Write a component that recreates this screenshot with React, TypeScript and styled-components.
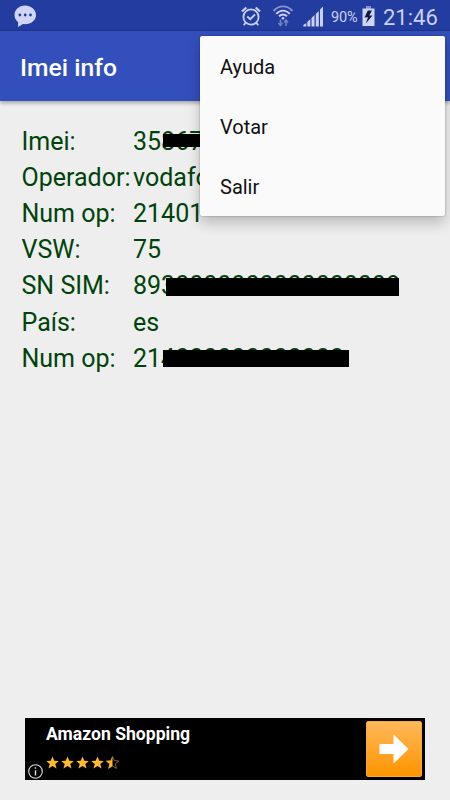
import React from "react";
import styled, { createGlobalStyle } from "styled-components";

const GlobalStyle = createGlobalStyle`
  * { box-sizing: border-box; }
  body { margin: 0; background: #eeeeee; font-family: Roboto, "Noto Sans", sans-serif; }
`;

const Screen = styled.div`
  position: relative;
  width: 450px;
  height: 800px;
  overflow: hidden;
  display: flex;
  flex-direction: column;
  background: #eeeeee;
`;

const StatusBar = styled.header`
  height: 31px;
  flex: none;
  display: flex;
  align-items: center;
  padding: 2px 12px 0 14px;
  background: #233c9f;
  border-bottom: 1px solid #20368f;
  color: #c9d0f3;
  svg { display: block; flex: none; }
`;

const StatusGroup = styled.div`
  display: flex;
  align-items: center;
  margin-left: auto;
`;

const Percent = styled.span`
  width: 27px;
  margin: 2px 4px 0 7px;
  font-size: 14.5px;
  letter-spacing: -0.1px;
  white-space: nowrap;
`;

const Clock = styled.span`
  width: 55px;
  margin: 3px 0 0 8px;
  font-size: 22px;
  line-height: 26px;
  font-weight: 400;
  white-space: nowrap;
`;

const AppBar = styled.div`
  height: 70px;
  flex: none;
  display: flex;
  align-items: center;
  padding: 2px 20px 0;
  background: #334fbb;
  box-shadow: 0 2px 4px rgba(0, 0, 0, 0.32);
  z-index: 1;
`;

const Title = styled.h1`
  margin: 0;
  font-size: 24.7px;
  font-weight: 500;
  color: #fff;
`;

const Details = styled.dl`
  display: grid;
  grid-template-columns: 111.5px 1fr;
  grid-auto-rows: 36.2px;
  margin: 0;
  padding: 22.7px 0 0 21.5px;
  flex: 1;
  align-content: start;
  font-size: 25px;
  line-height: 36.2px;
  color: #00430a;
  white-space: nowrap;
`;

const Label = styled.dt`
  margin: 0;
`;

const Value = styled.dd`
  margin: 0;
  position: relative;
`;

const Redaction = styled.span<{ $left: number; $top: number; $width: number; $height: number }>`
  position: absolute;
  left: ${(p) => p.$left}px;
  top: ${(p) => p.$top}px;
  width: ${(p) => p.$width}px;
  height: ${(p) => p.$height}px;
  background: #000;
`;

const Menu = styled.nav`
  position: absolute;
  z-index: 3;
  top: 36px;
  left: 200px;
  width: 245px;
  height: 180px;
  display: flex;
  flex-direction: column;
  background: #fafafa;
  border-radius: 2px;
  box-shadow: 0 7px 14px rgba(0, 0, 0, 0.22), 0 0 2px rgba(0, 0, 0, 0.35);
`;

const MenuItem = styled.div`
  height: 60px;
  display: flex;
  align-items: center;
  padding: 2px 20px 0;
  font-size: 20px;
  color: #111;
`;

const Ad = styled.footer`
  width: 400px;
  height: 62px;
  flex: none;
  margin: 0 0 20px 25px;
  display: flex;
  background: #000;
  color: #fff;
`;

const InfoSlot = styled.div`
  width: 21px;
  display: flex;
  align-items: flex-end;
  padding: 0 0 1px 3px;
  svg { flex: none; }
`;

const AdBody = styled.div`
  flex: 1;
  display: flex;
  flex-direction: column;
`;

const AdTitle = styled.strong`
  margin-top: 6px;
  font-size: 17.6px;
  line-height: 21px;
  font-weight: 700;
`;

const Stars = styled.div`
  display: flex;
  gap: 2px;
  margin-top: 11px;
`;

const AdButton = styled.div`
  width: 56px;
  height: 56px;
  margin: 3px 3px 0 0;
  display: flex;
  align-items: center;
  justify-content: center;
  border-radius: 2px;
  border: 1px solid #f7a737;
  background: linear-gradient(#ffb85a, #ff9400);
`;

const STAR = "M6.5 .5 8.3 4.7 12.8 5 9.3 7.9 10.5 12.4 6.5 10 2.5 12.4 3.7 7.9 .2 5 4.7 4.7Z";

const Star = ({ half = false }: { half?: boolean }) => (
  <svg width="13" height="13" viewBox="0 0 13 13">
    {half ? (
      <>
        <path d={STAR} fill="none" stroke="#a87c2c" strokeWidth=".8" />
        <path d="M6.5 .5V10L2.5 12.4 3.7 7.9 .2 5 4.7 4.7Z" fill="#ffb92e" />
      </>
    ) : (
      <path d={STAR} fill="#ffb92e" />
    )}
  </svg>
);

const ChatIcon = () => (
  <svg width="23" height="23" viewBox="0 0 23 23">
    <path d="M11 .5C5 .5.5 4.8.5 10c0 3 1.4 5.4 3.7 7.2L4 22l5-3c7 1 13-3 13-9C22 4.8 17 .5 11 .5Z" fill="#d0d5f5" />
    <g fill="#233c9f">
      <circle cx="5.9" cy="10" r="1.4" />
      <circle cx="11.2" cy="10" r="1.4" />
      <circle cx="16.5" cy="10" r="1.4" />
    </g>
  </svg>
);

const AlarmIcon = () => (
  <svg width="20" height="21" viewBox="0 0 20 21" fill="none" stroke="#c9d0f3" strokeWidth="1.8">
    <circle cx="10" cy="11" r="7.6" />
    <path d="M1 5.5 5.3 1.5M19 5.5 14.7 1.5" strokeWidth="2.2" />
    <path d="M6.3 10.5 9.2 13.2 14 8.5M4.5 16.8 2.8 19.3M15.5 16.8 17.2 19.3" />
  </svg>
);

const WifiIcon = () => (
  <svg width="22" height="22" viewBox="0 0 22 22" fill="none" stroke="#c9d0f3" strokeWidth="1.9">
    <path d="M1.5 6C7-.2 15-.2 20.500 6" stroke="#8793d0" />
    <path d="M4.2 8.8C8.3 4.500 13.7 4.500 17.8 8.8M7 11.3c2.5-2.3 5.5-2.3 8 0" />
    <circle cx="11" cy="13.3" r="1.3" fill="#c9d0f3" stroke="none" />
    <path d="M8.5 14.5V20M6.500 18 8.500 20.5 10.5 18M14 21V15.5M12 17.5 14 15 16 17.5" stroke="#7180c4" strokeWidth="1.6" />
  </svg>
);

const SignalIcon = () => (
  <svg width="21" height="21" viewBox="0 0 21 21" fill="#c9d0f3">
    <path d="M.3 20.500V19L3.300 17v3.500ZM4.300 20.500V16L7.300 13v7.500ZM8.500 20.500V12L11.500 9v11.500ZM12.800 20.500V8L15.800 5v15.500ZM17 20.500V3.500L20 .5v20Z" />
  </svg>
);

const BatteryIcon = () => (
  <svg width="13" height="20" viewBox="0 0 13 20">
    <path d="M4 0h5v3H4z" fill="#8190ce" />
    <path d="M.5 2.5h12V20H.5z" fill="#d0d5f5" />
    <path d="M5.800 4.500 2.500 11.5 6 11.200 3.800 17.500 10.500 9.500 7.300 9.500 10 4.500Z" fill="#111b42" />
  </svg>
);

const InfoIcon = () => (
  <svg width="15" height="15" viewBox="0 0 15 15" fill="none" stroke="#ddd" strokeWidth="1.1">
    <circle cx="7.5" cy="7.5" r="6.8" />
    <path d="M7.5 6.2v5.3M7.5 3.3v1.5" strokeWidth="1.4" />
  </svg>
);

const ArrowIcon = () => (
  <svg width="30" height="30" viewBox="0 0 30 30">
    <path d="M.5 10H14.500V.5L29.500 15 14.500 29.500V20H.5Z" fill="#fff" />
  </svg>
);

const AlarmSlot = styled.div`margin-right: 11px;`;
const WifiSlot = styled.div`margin-right: 9px;`;

type Bar = { left: number; top: number; width: number; height: number };
const rows: { label: string; value: string; bar?: Bar }[] = [
  { label: "Imei:", value: "35867", bar: { left: 30, top: 10.3, width: 37, height: 13 } },
  { label: "Operador:", value: "vodafo" },
  { label: "Num op:", value: "21401" },
  { label: "VSW:", value: "75" },
  { label: "SN SIM:", value: "8930000000000000008", bar: { left: 33, top: 9.5, width: 233, height: 18 } },
  { label: "País:", value: "es" },
  { label: "Num op:", value: "214000000000000", bar: { left: 30, top: 9.1, width: 186, height: 17 } },
];

export default function App() {
  return (
    <>
      <GlobalStyle />
      <Screen>
        <StatusBar>
          <ChatIcon />
          <StatusGroup>
            <AlarmSlot><AlarmIcon /></AlarmSlot>
            <WifiSlot><WifiIcon /></WifiSlot>
            <SignalIcon />
            <Percent>90%</Percent>
            <BatteryIcon />
            <Clock>21:46</Clock>
          </StatusGroup>
        </StatusBar>
        <AppBar><Title>Imei info</Title></AppBar>
        <Details>
          {rows.map(({ label, value, bar }, i) => (
            <React.Fragment key={i}>
              <Label>{label}</Label>
              <Value>
                {value}
                {bar && <Redaction $left={bar.left} $top={bar.top} $width={bar.width} $height={bar.height} />}
              </Value>
            </React.Fragment>
          ))}
        </Details>
        <Ad>
          <InfoSlot><InfoIcon /></InfoSlot>
          <AdBody>
            <AdTitle>Amazon Shopping</AdTitle>
            <Stars><Star /><Star /><Star /><Star /><Star half /></Stars>
          </AdBody>
          <AdButton><ArrowIcon /></AdButton>
        </Ad>
        <Menu>
          <MenuItem>Ayuda</MenuItem>
          <MenuItem>Votar</MenuItem>
          <MenuItem>Salir</MenuItem>
        </Menu>
      </Screen>
    </>
  );
}
